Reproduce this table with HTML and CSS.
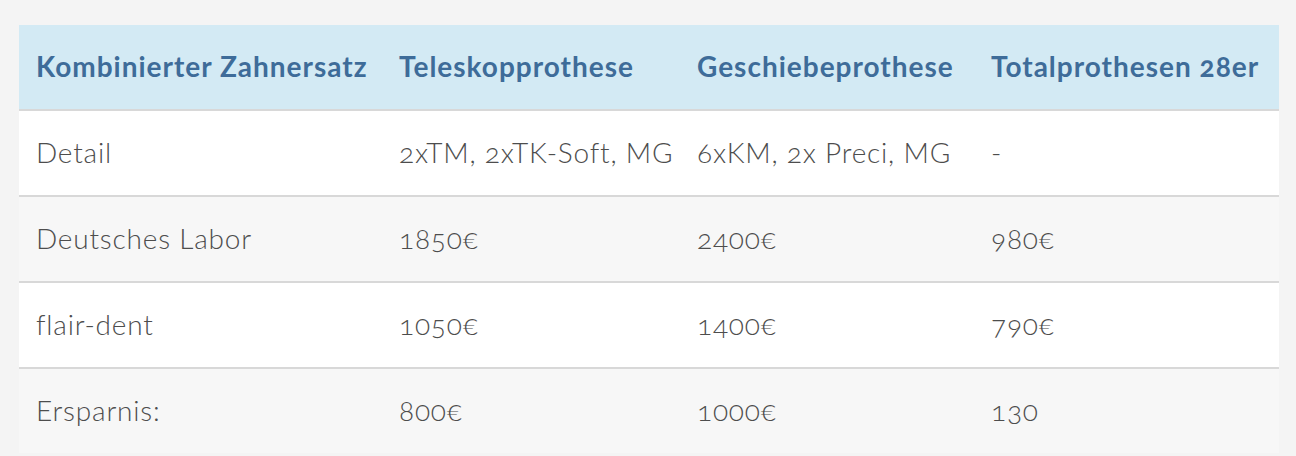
FILE: index.html
```html
<!DOCTYPE html>
<html lang="de">
<head>
<meta charset="utf-8">
<title>Preisvergleich</title>
<link rel="stylesheet" href="styles.css">
</head>
<body>
<table class="price-table">
  <colgroup>
    <col class="c1"><col class="c2"><col class="c3"><col class="c4">
  </colgroup>
  <thead>
    <tr>
      <th>Kombinierter Zahnersatz</th>
      <th>Teleskopprothese</th>
      <th>Geschiebeprothese</th>
      <th>Totalprothesen 28er</th>
    </tr>
  </thead>
  <tbody>
    <tr>
      <td>Detail</td>
      <td>2xTM, 2xTK-Soft, MG</td>
      <td>6xKM, 2x Preci, MG</td>
      <td>-</td>
    </tr>
    <tr class="alt">
      <td>Deutsches Labor</td>
      <td>1850€</td>
      <td>2400€</td>
      <td>980€</td>
    </tr>
    <tr>
      <td>flair-dent</td>
      <td>1050€</td>
      <td>1400€</td>
      <td>790€</td>
    </tr>
    <tr class="alt">
      <td>Ersparnis:</td>
      <td>800€</td>
      <td>1000€</td>
      <td>130</td>
    </tr>
  </tbody>
</table>
</body>
</html>
```
FILE: styles.css
```css
html, body {
  margin: 0;
  background: #f4f4f4;
}
body {
  padding: 25px 17px 0 19px;
  font-family: Lato, "Open Sans", sans-serif;
}
.price-table {
  width: 1260px;
  border-collapse: collapse;
  table-layout: fixed;
  font-variant-numeric: oldstyle-nums;
}
.c1 { width: 363px; }
.c2 { width: 298px; }
.c3 { width: 294px; }
.c4 { width: 305px; }
.price-table th {
  height: 82px;
  padding: 0 0 2px 17px;
  text-align: left;
  vertical-align: middle;
  background: #d3eaf4;
  color: #3e6c99;
  font-weight: 700;
  font-size: 28px;
  letter-spacing: 1px;
  white-space: nowrap;
  border-bottom: 2px solid #d8d8d8;
}
.price-table td {
  height: 81px;
  padding: 0 0 3px 17px;
  vertical-align: middle;
  background: #ffffff;
  color: #4d4d4d;
  font-weight: 300;
  font-size: 28px;
  letter-spacing: 0.8px;
  white-space: nowrap;
}
.price-table tbody tr + tr td {
  border-top: 2px solid #d8d8d8;
}
.price-table tr.alt td {
  background: #f7f7f7;
}
```
